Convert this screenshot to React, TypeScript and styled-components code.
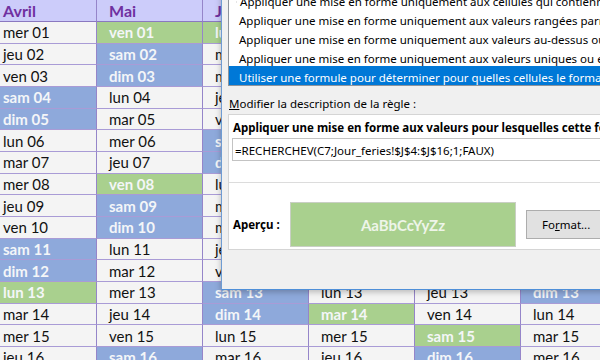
import React from "react";
import styled, { createGlobalStyle } from "styled-components";

type MonthType = {
	name: string;
	start: number;
	holidays: number[];
};

type CellProps = {
	kind?: "plain" | "weekend" | "holiday";
};

type ItemProps = {
	selected?: boolean;
};

const dayNames = ["lun", "mar", "mer", "jeu", "ven", "sam", "dim"];

const months: MonthType[] = [
	{ name: "Avril", start: 2, holidays: [13] },
	{ name: "Mai", start: 4, holidays: [1, 8] },
	{ name: "Juin", start: 0, holidays: [1] },
	{ name: "Juillet", start: 2, holidays: [14] },
	{ name: "Août", start: 5, holidays: [15] },
	{ name: "Septembre", start: 1, holidays: [] },
];

const ruleTypes = [
	"Appliquer une mise en forme uniquement aux cellules qui contiennent",
	"Appliquer une mise en forme uniquement aux valeurs rangées parmi les premières ou les dernières valeurs",
	"Appliquer une mise en forme uniquement aux valeurs au-dessus ou en dessous de la moyenne",
	"Appliquer une mise en forme uniquement aux valeurs uniques ou en double",
	"Utiliser une formule pour déterminer pour quelles cellules le format sera appliqué",
];

const days = Array.from(Array(16).keys()).map((i) => i + 1);

const Arrow = ({ selected }: ItemProps) => (
	<svg width="8" height="6" viewBox="0 0 8 6">
		<path d="M0 3h3" stroke={selected ? "#fff" : "#000"} strokeWidth="1" />
		<polygon points="3,0.5 7.5,3 3,5.5" fill={selected ? "#fff" : "#000"} />
	</svg>
);

export default function App() {
	return (
		<>
			<GlobalStyle />
			<StyledPage>
				<StyledSheet>
					{months.map((month) => (
						<StyledHeaderCell key={month.name}>{month.name}</StyledHeaderCell>
					))}
					{days.map((day) =>
						months.map((month) => {
							const weekday = (month.start + day - 1) % 7;
							const kind = month.holidays.includes(day)
								? "holiday"
								: weekday >= 5
								? "weekend"
								: "plain";
							return (
								<StyledCell key={month.name + day} kind={kind}>
									{dayNames[weekday]} {String(day).padStart(2, "0")}
								</StyledCell>
							);
						})
					)}
				</StyledSheet>

				<StyledDialog>
					<StyledListBox>
						{ruleTypes.map((rule, index) => (
							<StyledListItem key={index} selected={index === 4}>
								<Arrow selected={index === 4} />
								<span>{rule}</span>
							</StyledListItem>
						))}
					</StyledListBox>
					<StyledLabel>
						<u>M</u>odifier la description de la règle :
					</StyledLabel>
					<StyledPanel>
						<StyledPanelTitle>
							Appliquer une mise en forme aux valeurs pour lesquelles cette formule est vraie :
						</StyledPanelTitle>
						<StyledFormula>=RECHERCHEV(C7;Jour_feries!$J$4:$J$16;1;FAUX)</StyledFormula>
						<StyledSeparator />
						<StyledPreviewRow>
							<StyledPreviewLabel>Aperçu :</StyledPreviewLabel>
							<StyledPreview>AaBbCcYyZz</StyledPreview>
							<StyledButton>
								Fo<u>r</u>mat...
							</StyledButton>
						</StyledPreviewRow>
					</StyledPanel>
				</StyledDialog>
			</StyledPage>
		</>
	);
}

const GlobalStyle = createGlobalStyle`
	html, body {
		margin: 0;
		padding: 0;
		background: #ffffff;
		overflow: hidden;
	}
	* {
		box-sizing: border-box;
	}
`;

const StyledPage = styled.div`
	position: relative;
	width: 600px;
	height: 360px;
	overflow: hidden;
	background: #f3f3f3;
`;

const StyledSheet = styled.div`
	display: grid;
	grid-template-columns: repeat(6, 106px);
	grid-template-rows: 22px repeat(16, 21.667px);
	margin-left: -9px;
	font-family: Lato, "Liberation Sans", sans-serif;
`;

const StyledHeaderCell = styled.div`
	display: flex;
	align-items: center;
	padding-left: 12px;
	background: #ccccfa;
	color: #7030a0;
	font-size: 16px;
	font-weight: 700;
	border-right: 1px solid #9585c9;
	border-bottom: 1px solid #8a78c0;
	white-space: nowrap;
	overflow: hidden;
`;

const StyledCell = styled.div<CellProps>`
	display: flex;
	align-items: center;
	padding-left: 12px;
	font-size: 15px;
	white-space: nowrap;
	overflow: hidden;
	background: ${(props) =>
		props.kind === "holiday"
			? "#a9d08e"
			: props.kind === "weekend"
			? "#8ea9db"
			: "#f4f4f4"};
	color: ${(props) => (props.kind === "plain" ? "#111111" : "#f4f6f8")};
	font-weight: ${(props) => (props.kind === "plain" ? 400 : 700)};
	border-right: 1px solid #9585c9;
	border-bottom: 1px solid #a99bd6;
`;

const StyledDialog = styled.div`
	position: absolute;
	left: 221px;
	top: -12px;
	width: 400px;
	height: 302px;
	display: flex;
	flex-direction: column;
	padding-left: 6px;
	background: #f0f0f0;
	border-left: 1px solid #6f9cd2;
	border-bottom: 1px solid #4f8fd8;
	box-shadow: 0 2px 6px rgba(0, 0, 0, 0.25);
	font-family: "Noto Sans", "Open Sans", sans-serif;
	font-size: 11.5px;
	color: #000000;
`;

const StyledListBox = styled.div`
	display: flex;
	flex-direction: column;
	padding-top: 1px;
	background: #ffffff;
	border: 1px solid #8f949b;
	border-right: none;
`;

const StyledListItem = styled.div<ItemProps>`
	display: flex;
	align-items: center;
	gap: 3px;
	height: 19px;
	padding-left: 7px;
	padding-top: 4px;
	white-space: nowrap;
	background: ${(props) => (props.selected ? "#0078d7" : "transparent")};
	color: ${(props) => (props.selected ? "#ffffff" : "#000000")};
`;

const StyledLabel = styled.div`
	margin-top: 10px;
	padding-left: 1px;
	line-height: 16px;
	white-space: nowrap;
`;

const StyledPanel = styled.div`
	display: flex;
	flex-direction: column;
	margin-top: 2px;
	padding: 5px 0 2px 3px;
	background: #ffffff;
	border: 1px solid #d5d5d5;
	border-right: none;
`;

const StyledPanelTitle = styled.div`
	padding-left: 1px;
	line-height: 16px;
	font-weight: 700;
	white-space: nowrap;
`;

const StyledFormula = styled.div`
	height: 23px;
	margin-top: 2px;
	display: flex;
	align-items: center;
	padding-left: 2px;
	padding-top: 1px;
	border: 1px solid #c3c3c3;
	border-right: none;
	white-space: nowrap;
`;

const StyledSeparator = styled.div`
	height: 22px;
	margin-left: -3px;
	border-bottom: 1px solid #dcdcdc;
`;

const StyledPreviewRow = styled.div`
	display: flex;
	align-items: center;
	margin-top: 19px;
`;

const StyledPreviewLabel = styled.div`
	width: 58px;
	padding-left: 1px;
	font-weight: 700;
	white-space: nowrap;
`;

const StyledPreview = styled.div`
	width: 226px;
	height: 45px;
	display: flex;
	align-items: center;
	justify-content: center;
	background: #a9d08e;
	border: 1px solid #c9cfc4;
	color: #eef5e9;
	font-family: Lato, sans-serif;
	font-size: 15px;
	font-weight: 700;
`;

const StyledButton = styled.div`
	width: 82px;
	height: 29px;
	margin-left: 10px;
	display: flex;
	align-items: center;
	padding-left: 15px;
	background: #e1e1e1;
	border: 1px solid #adadad;
	white-space: nowrap;
`;
